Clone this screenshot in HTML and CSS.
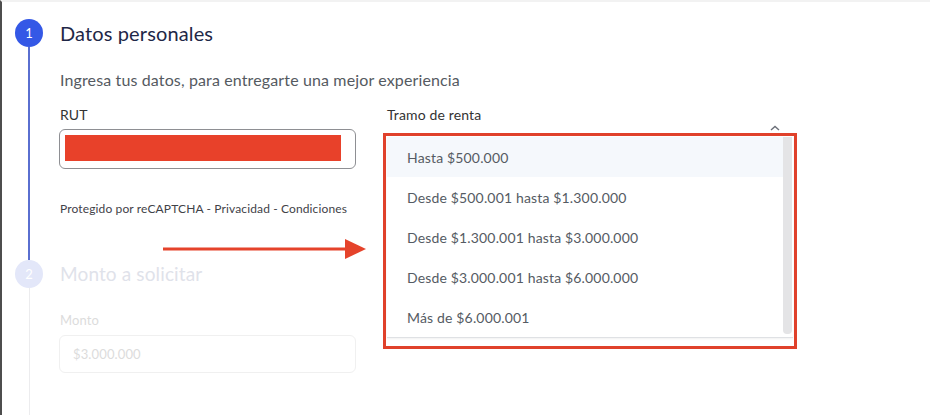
FILE: index.html
```html
<!DOCTYPE html>
<html lang="es">
  <head>
    <meta charset="UTF-8" />
    <meta name="viewport" content="width=device-width, initial-scale=1.0" />
    <title>Datos personales</title>
    <link rel="stylesheet" href="styles.css">
  </head>
  <body>
    <div class="page">
      <section class="step active">
        <div class="marker">
          <span class="dot">1</span>
          <span class="rail"></span>
        </div>
        <div class="step-body">
          <h2 class="step-title">Datos personales</h2>
          <p class="step-sub">Ingresa tus datos, para entregarte una mejor experiencia</p>
          <div class="fields">
            <div class="field">
              <label class="label">RUT</label>
              <div class="input rut"><span class="redact"></span></div>
              <p class="captcha">Protegido por reCAPTCHA - Privacidad - Condiciones</p>
            </div>
            <div class="field field-select">
              <label class="label">Tramo de renta</label>
              <div class="select">
                <svg class="chevron" width="10" height="6" viewBox="0 0 10 6">
                  <path d="M1 5 L5 1.5 L9 5" fill="none" stroke="#6b6f78" stroke-width="1.4" />
                </svg>
                <div class="callout">
                  <div class="menu">
                    <ul class="options">
                      <li class="option hover">Hasta $500.000</li>
                      <li class="option">Desde $500.001 hasta $1.300.000</li>
                      <li class="option">Desde $1.300.001 hasta $3.000.000</li>
                      <li class="option">Desde $3.000.001 hasta $6.000.000</li>
                      <li class="option">Más de $6.000.001</li>
                    </ul>
                    <span class="scrollbar"></span>
                  </div>
                </div>
              </div>
            </div>
          </div>
        </div>
      </section>

      <section class="step disabled">
        <div class="marker">
          <span class="dot">2</span>
          <span class="rail"></span>
        </div>
        <div class="step-body">
          <h2 class="step-title">Monto a solicitar</h2>
          <label class="label small">Monto</label>
          <div class="input amount">$3.000.000</div>
        </div>
      </section>

      <!-- flecha de anotacion -->
      <svg class="arrow" width="204" height="22" viewBox="0 0 204 22">
        <line x1="0" y1="11" x2="186" y2="11" stroke="#e5432b" stroke-width="3" />
        <polygon points="182,1 203,11 182,21" fill="#e5432b" />
      </svg>
    </div>
  </body>
</html>
```

FILE: styles.css
```css
* {
  padding: 0px;
  margin: 0px;
  box-sizing: border-box;
}

body {
  font-family: "Lato", "Open Sans", sans-serif;
  letter-spacing: 0.13px;
  background-color: #fff;
}

.page {
  position: relative;
  height: 415px;
  overflow: hidden;
  border-left: 2px solid #4d4d4d;
  border-top: 2px solid #f2f2f2;
  padding: 17px 0 0 13px;
  display: flex;
  flex-direction: column;
}

.step {
  display: flex;
  gap: 16px;
}

.step.disabled {
  flex: 1;
}

.marker {
  width: 28px;
  display: flex;
  flex-direction: column;
  align-items: center;
  flex-shrink: 0;
}

.dot {
  width: 28px;
  height: 28px;
  border-radius: 50%;
  background-color: #3458e6;
  color: #fff;
  font-size: 13px;
  display: flex;
  align-items: center;
  justify-content: center;
}

.rail {
  flex: 1;
  width: 2px;
  background-color: #5a6fd0;
}

.disabled .dot {
  background-color: #e3e7f9;
}

.disabled .rail {
  background-color: #ececee;
  width: 1px;
}

.step-body {
  flex: 1;
}

.active .step-body {
  padding-bottom: 43px;
}

.step-title {
  font-size: 20px;
  line-height: 28px;
  font-weight: 400;
  color: #1e2747;
  padding-left: 1px;
}

.disabled .step-title {
  color: #dfe2ea;
  font-size: 19px;
}

.step-sub {
  margin-top: 22px;
  font-size: 16px;
  line-height: 22px;
  color: #555a61;
  padding-left: 1px;
}

.fields {
  margin-top: 14px;
  display: flex;
  gap: 31px;
}

.field {
  width: 297px;
  display: flex;
  flex-direction: column;
}

.field-select {
  width: 410px;
}

.label {
  display: block;
  font-size: 14px;
  line-height: 20px;
  color: #333;
  padding-left: 1px;
  margin-bottom: 4px;
}

.field-select .label {
  padding-left: 0;
}

.label.small {
  margin-top: 23px;
  font-size: 13px;
  line-height: 18px;
  color: #dcdcdc;
  margin-bottom: 6px;
}

.input {
  height: 40px;
  border: 1px solid #8e8f93;
  border-radius: 6px;
  padding: 5px 14px 5px 5px;
}

.redact {
  display: block;
  height: 26px;
  background-color: #e8412a;
}

.input.amount {
  height: 38px;
  border-color: #f0f0f0;
  color: #dcdcdc;
  font-size: 13px;
  line-height: 28px;
  padding: 4px 13px;
  width: 297px;
}

.captcha {
  margin-top: 32px;
  font-size: 12px;
  line-height: 16px;
  color: #3f4248;
  padding-left: 1px;
}

.select {
  position: relative;
  height: 40px;
}

.chevron {
  position: absolute;
  top: -4px;
  right: 17px;
}

.callout {
  position: absolute;
  top: 4px;
  left: -4px;
  width: 414px;
  border: 3px solid #e0412b;
  padding: 1px 1px 8px 1px;
  background-color: #fff;
  z-index: 2;
}

.menu {
  display: flex;
  background-color: #fff;
  border-bottom: 1px solid #dfe1e4;
  box-shadow: 0 1px 2px rgba(0, 0, 0, 0.06);
}

.options {
  list-style: none;
  flex: 1;
}

.option {
  height: 40px;
  display: flex;
  align-items: center;
  padding-left: 20px;
  font-size: 14px;
  letter-spacing: 0.16px;
  color: #555b63;
}

.option.hover {
  background-color: #f5f8fc;
}

.scrollbar {
  width: 9px;
  margin: 0 1px 3px 0;
  background-color: #e4e4e6;
  border-radius: 0 0 4px 4px;
}

.arrow {
  position: absolute;
  left: 161px;
  top: 236px;
}
```
